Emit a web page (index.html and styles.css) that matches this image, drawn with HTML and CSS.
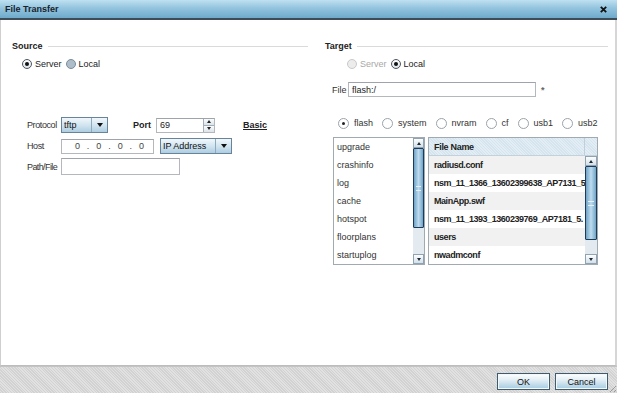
FILE: index.html
```html
<!DOCTYPE html>
<html lang="en">
<head>
  <meta charset="UTF-8" />
  <title>File Transfer</title>
  <link rel="stylesheet" href="styles.css">
</head>
<body>
  <div class="dialog">
    <div class="titlebar">
      <span class="title">File Transfer</span>
      <svg class="close" width="7" height="7" viewBox="0 0 7 7"><path d="M0.8 0.8L6.2 6.2M6.2 0.8L0.8 6.2" stroke="#111" stroke-width="1.8"/></svg>
    </div>

    <div class="body">
      <!-- Source -->
      <div class="col source">
        <div class="legend"><span>Source</span><i class="rule"></i></div>
        <div class="radios">
          <span class="radio"><span class="dot on"></span>Server</span>
          <span class="radio"><span class="dot hover"></span>Local</span>
        </div>

        <div class="form">
          <div class="row row-protocol">
            <span class="lbl">Protocol</span>
            <span class="select sel-proto"><span class="val">tftp</span><span class="arrow"></span></span>
            <span class="port-lbl">Port</span>
            <span class="input port"><span class="val">69</span>
              <span class="spin"><span class="up"></span><span class="down"></span></span>
            </span>
            <a class="basic">Basic</a>
          </div>
          <div class="row row-host">
            <span class="lbl">Host</span>
            <span class="input ip"><span>0</span><span>.</span><span>0</span><span>.</span><span>0</span><span>.</span><span>0</span></span>
            <span class="select sel-ip"><span class="val">IP Address</span><span class="arrow"></span></span>
          </div>
          <div class="row row-path">
            <span class="lbl">Path/File</span>
            <span class="input path"></span>
          </div>
        </div>
      </div>

      <!-- Target -->
      <div class="col target">
        <div class="legend"><span>Target</span><i class="rule"></i></div>
        <div class="radios">
          <span class="radio disabled"><span class="dot"></span>Server</span>
          <span class="radio"><span class="dot on"></span>Local</span>
        </div>
        <div class="file-row">
          <span class="lbl">File</span>
          <span class="input file"><span class="val">flash:/</span></span>
          <span class="req">*</span>
        </div>
        <div class="storage">
          <span class="sradio"><span class="sdot on"></span>flash</span>
          <span class="sradio"><span class="sdot"></span>system</span>
          <span class="sradio"><span class="sdot"></span>nvram</span>
          <span class="sradio"><span class="sdot"></span>cf</span>
          <span class="sradio"><span class="sdot"></span>usb1</span>
          <span class="sradio"><span class="sdot"></span>usb2</span>
        </div>

        <div class="lists">
          <div class="dirlist">
            <ul class="items">
              <li>upgrade</li>
              <li>crashinfo</li>
              <li>log</li>
              <li>cache</li>
              <li>hotspot</li>
              <li>floorplans</li>
              <li>startuplog</li>
            </ul>
            <div class="scrollbar sb-dirs">
              <span class="btn up"></span>
              <span class="track"><span class="thumb"></span></span>
              <span class="btn down"></span>
            </div>
          </div>

          <div class="grid">
            <div class="grid-head">
              <span class="hcell">File Name</span>
              <span class="hfill"></span>
            </div>
            <div class="grid-body">
              <ul class="rows">
                <li>radiusd.conf</li>
                <li>nsm_11_1366_13602399638_AP7131_5</li>
                <li>MainApp.swf</li>
                <li>nsm_11_1393_1360239769_AP7181_5.</li>
                <li>users</li>
                <li>nwadmconf</li>
              </ul>
              <div class="scrollbar sb-files">
                <span class="btn up"></span>
                <span class="track"><span class="thumb"></span></span>
                <span class="btn down"></span>
              </div>
            </div>
          </div>
        </div>
      </div>
    </div>

    <div class="footer">
      <button class="btn-dlg">OK</button>
      <button class="btn-dlg">Cancel</button>
      <span class="grip"></span>
    </div>
  </div>
</body>
</html>
```

FILE: styles.css
```css
body {
  margin: 0;
  font-family: "Liberation Sans", Arial, sans-serif;
  font-size: 9px;
  color: #222;
  background: #fff;
}

.dialog {
  width: 617px;
  height: 393px;
  display: flex;
  flex-direction: column;
  background: #fff;
}

/* Barra de titulo */
.titlebar {
  height: 18px;
  flex: none;
  display: flex;
  align-items: center;
  justify-content: space-between;
  padding: 0 10px 0 5px;
  background: linear-gradient(#bfe0f1, #93c4de 45%, #6eaacb);
  border-bottom: 2px solid #3c4d58;
}

.title {
  font-weight: bold;
  color: #17232d;
}

.body {
  flex: 1;
  display: flex;
  border-left: 1px solid #cfcfcf;
  border-right: 2px solid #d6d6d6;
  border-bottom: 1px solid #bdbdbd;
}

.col {
  padding-top: 20px;
}

.source {
  width: 296px;
  padding-left: 11px;
  padding-right: 2px;
}

.target {
  flex: 1;
  padding-left: 15px;
  padding-right: 7px;
}

.legend {
  height: 12px;
  display: flex;
  align-items: center;
  gap: 5px;
  font-weight: bold;
}

.legend .rule {
  flex: 1;
  border-top: 1px solid #dadada;
}

/* Radios */
.radios {
  display: flex;
  height: 12px;
  align-items: center;
  margin-top: 6px;
  margin-left: 10px;
  gap: 4px;
}

.target .radios {
  margin-left: 22px;
}

.radio {
  display: flex;
  align-items: center;
  gap: 3px;
}

.dot {
  width: 8px;
  height: 8px;
  border-radius: 50%;
  border: 1px solid #8c99a4;
  background: linear-gradient(#eef2f5, #cfd8df);
  display: flex;
  align-items: center;
  justify-content: center;
}

.dot.on {
  border-color: #4c565e;
  background: linear-gradient(#ffffff, #dfe5ea);
}

.dot.on::after {
  content: "";
  width: 4px;
  height: 4px;
  border-radius: 50%;
  background: #111;
}

.dot.hover {
  background: #adbdca;
  border-color: #7b8b98;
}

.radio.disabled {
  color: #a8a8a8;
}

.radio.disabled .dot {
  border-color: #c9c9c9;
  background: #ececec;
}

/* Formulario de origen */
.form {
  margin-top: 47px;
  margin-left: 15px;
}

.row {
  display: flex;
  align-items: center;
}

.row-host {
  margin-top: 5px;
}

.row-path {
  margin-top: 4px;
}

.lbl {
  width: 34px;
  letter-spacing: -0.4px;
  white-space: nowrap;
  color: #333;
}

.row-path .lbl {
  letter-spacing: -0.6px;
}

.input {
  box-sizing: border-box;
  display: flex;
  align-items: center;
  border: 1px solid #b4b8bc;
  border-top-color: #9ea4a9;
  background: #fff;
  padding-left: 3px;
}

.select {
  box-sizing: border-box;
  display: flex;
  align-items: stretch;
  border: 1px solid #67849a;
  background: linear-gradient(#f1f7fb, #cfe3ef 55%, #aecde1);
  color: #111;
}

.select .val {
  flex: 1;
  display: flex;
  align-items: center;
  padding-left: 2px;
}

.select .arrow {
  width: 15px;
  border-left: 1px solid #8eaabd;
  display: flex;
  align-items: center;
  justify-content: center;
}

.select .arrow::after {
  content: "";
  border-left: 3px solid transparent;
  border-right: 3px solid transparent;
  border-top: 4px solid #111;
}

.sel-proto {
  width: 47px;
  height: 16px;
}

.port-lbl {
  font-weight: bold;
  margin-left: 25px;
  margin-right: 5px;
}

.port {
  width: 59px;
  height: 15px;
  padding-right: 0;
}

.port .val {
  flex: 1;
}

.spin {
  width: 10px;
  height: 13px;
  display: flex;
  flex-direction: column;
  border-left: 1px solid #a3afb8;
}

.spin span {
  flex: 1;
  display: flex;
  align-items: center;
  justify-content: center;
  background: linear-gradient(#fbfcfd, #dbe4ea);
}

.spin .up {
  border-bottom: 1px solid #a3afb8;
}

.spin .up::after {
  content: "";
  border-left: 2px solid transparent;
  border-right: 2px solid transparent;
  border-bottom: 3px solid #222;
}

.spin .down::after {
  content: "";
  border-left: 2px solid transparent;
  border-right: 2px solid transparent;
  border-top: 3px solid #222;
}

.basic {
  margin-left: 28px;
  font-weight: bold;
  text-decoration: underline;
  color: #222;
}

.ip {
  width: 93px;
  height: 15px;
  justify-content: space-evenly;
  padding: 0 2px 0 6px;
  color: #444;
}

.sel-ip {
  width: 72px;
  height: 16px;
  margin-left: 6px;
}

.path {
  width: 119px;
  height: 17px;
}

/* Destino */
.file-row {
  display: flex;
  align-items: center;
  margin-top: 12px;
  margin-left: 7px;
}

.file-row .lbl {
  width: 16px;
  letter-spacing: 0;
}

.file {
  width: 188px;
  height: 15px;
}

.req {
  margin-left: 5px;
  font-weight: bold;
  font-size: 9px;
  color: #666;
}

.storage {
  display: flex;
  align-items: center;
  height: 12px;
  margin-top: 20px;
  margin-left: 13px;
  gap: 9px;
}

.sradio {
  display: flex;
  align-items: center;
  gap: 5px;
  color: #333;
}

.sdot {
  width: 9px;
  height: 9px;
  border-radius: 50%;
  border: 1px solid #9aa3aa;
  background: #fff;
  display: flex;
  align-items: center;
  justify-content: center;
}

.sdot.on::after {
  content: "";
  width: 3px;
  height: 3px;
  border-radius: 50%;
  background: #222;
}

.lists {
  display: flex;
  gap: 3px;
  margin-top: 8px;
  margin-left: 8px;
}

.dirlist {
  width: 92px;
  height: 128px;
  box-sizing: border-box;
  border: 1px solid #a2aab1;
  display: flex;
}

ul {
  list-style: none;
  margin: 0;
  padding: 0;
}

.items {
  flex: 1;
}

.items li {
  height: 18px;
  line-height: 18px;
  padding-left: 3px;
  color: #333;
}

/* Barras de desplazamiento */
.scrollbar {
  width: 11px;
  display: flex;
  flex-direction: column;
  background: #e4ebf0;
}

.scrollbar .btn {
  height: 10px;
  flex: none;
  box-sizing: border-box;
  border: 1px solid #8fa3b2;
  background: linear-gradient(#fdfefe, #d3e0e9);
  display: flex;
  align-items: center;
  justify-content: center;
}

.scrollbar .up::after {
  content: "";
  border-left: 2px solid transparent;
  border-right: 2px solid transparent;
  border-bottom: 3px solid #1e2a33;
}

.scrollbar .down::after {
  content: "";
  border-left: 2px solid transparent;
  border-right: 2px solid transparent;
  border-top: 3px solid #1e2a33;
}

.scrollbar .track {
  flex: 1;
  display: flex;
  flex-direction: column;
}

.scrollbar .thumb {
  box-sizing: border-box;
  border: 1px solid #1d3b58;
  border-radius: 1px;
  background: linear-gradient(to right, #6fa4c7, #bfdcef 50%, #6fa4c7);
  position: relative;
}

.scrollbar .thumb::after {
  content: "";
  position: absolute;
  left: 2px;
  right: 2px;
  top: 50%;
  height: 3px;
  margin-top: -2px;
  border-top: 1px solid #e6f2fa;
  border-bottom: 1px solid #e6f2fa;
}

.sb-dirs .thumb {
  height: 80px;
}

.sb-files .thumb {
  height: 74px;
}

/* Tabla de archivos */
.grid {
  width: 170px;
  height: 128px;
  box-sizing: border-box;
  border: 1px solid #a2aab1;
  display: flex;
  flex-direction: column;
}

.grid-head {
  height: 17px;
  flex: none;
  display: flex;
  border-bottom: 1px solid #c3d1dc;
  background: repeating-linear-gradient(45deg, #d5e4ee 0 1px, #e2edf4 1px 2px);
}

.hcell {
  flex: 1;
  display: flex;
  align-items: center;
  padding-left: 5px;
  font-weight: bold;
  letter-spacing: -0.3px;
  color: #222;
  border-right: 1px solid #bfcfdb;
}

.hfill {
  width: 12px;
}

.grid-body {
  flex: 1;
  display: flex;
  overflow: hidden;
}

.rows {
  flex: 1;
  min-width: 0;
  overflow: hidden;
}

.rows li {
  height: 18px;
  line-height: 18px;
  padding-left: 5px;
  font-weight: bold;
  letter-spacing: -0.45px;
  white-space: nowrap;
  overflow: hidden;
  color: #222;
}

.rows li:nth-child(odd) {
  background: #f1f1f1;
}

.sb-files {
  width: 12px;
}

/* Pie */
.footer {
  height: 26px;
  flex: none;
  border-top: 1px solid #c4c4c4;
  background: repeating-linear-gradient(45deg, #d2d2d2 0 1px, #e1e1e1 1px 2px);
  display: flex;
  align-items: flex-start;
  justify-content: flex-end;
  gap: 5px;
  padding-right: 9px;
  position: relative;
}

.btn-dlg {
  margin-top: 6px;
  width: 53px;
  height: 17px;
  padding: 0;
  font-family: inherit;
  font-size: 9px;
  color: #111;
  border: 1px solid #3f5b70;
  box-shadow: inset 0 0 0 1px #f3f8fb;
  background: linear-gradient(#ffffff, #e2eef5 40%, #a5cbe1);
}

.grip {
  position: absolute;
  right: 1px;
  bottom: 1px;
  width: 9px;
  height: 9px;
  background: repeating-linear-gradient(135deg, transparent 0 2px, #9a9a9a 2px 3px);
  clip-path: polygon(100% 0, 100% 100%, 0 100%);
}
```
